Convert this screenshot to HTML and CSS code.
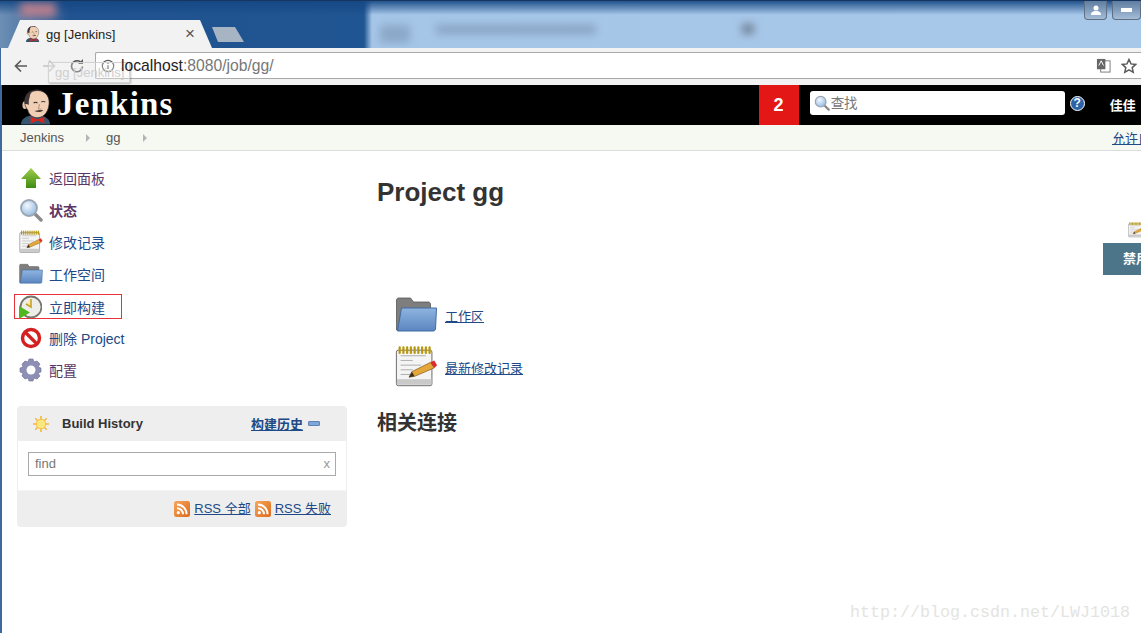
FILE: index.html
```html
<!DOCTYPE html>
<html lang="en">
<head>
  <meta charset="UTF-8">
  <title>gg [Jenkins]</title>
  <link rel="stylesheet" href="styles.css">
</head>
<body>
  <svg class="defs" width="0" height="0">
    <defs>
      <linearGradient id="g-green" x1="0" y1="0" x2="0" y2="1"><stop offset="0" stop-color="#9fd04a"/><stop offset="1" stop-color="#3f8a12"/></linearGradient>
      <linearGradient id="g-folder" x1="0" y1="0" x2="0" y2="1"><stop offset="0" stop-color="#8fb4e0"/><stop offset="1" stop-color="#5a86bf"/></linearGradient>
      <linearGradient id="g-rss" x1="0" y1="0" x2="1" y2="1"><stop offset="0" stop-color="#f7a65a"/><stop offset="1" stop-color="#dc6a1c"/></linearGradient>
      <radialGradient id="g-lens" cx=".4" cy=".35" r=".7"><stop offset="0" stop-color="#f2f8ff"/><stop offset="1" stop-color="#92b8e0"/></radialGradient>
      <symbol id="i-jenkins" viewBox="0 0 34 36">
        <path d="M1 36c0-5 4-8 9-9h12c5 1 9 4 9 9z" fill="#35566e"/>
        <ellipse cx="5" cy="16" rx="2.500" ry="4" fill="#e8c0a4"/>
        <path d="M5 13C5 6 11 1 18 1s12 5 12 12c0 4-1 8-3 11-2 3-5 5-9 5-5 0-9-3-10-8-2-2-3-5-3-8z" fill="#f0cfb4" stroke="#2a2a2a" stroke-width=".7"/>
        <path d="M5 15C3 8 8 1 15 0c-3 2-5 5-5 8-1 2-1 5-1 8-1-1-3-1-4-1z" fill="#3d3535"/>
        <path d="M15 0c3 0 6 0 9 2-4-1-7-1-9-1z" fill="#3d3535"/>
        <path d="M14 14c1-1 3-1 4 0M22 13c1-1 3-1 4 0" stroke="#2a2a2a" stroke-width="1.100" fill="none"/>
        <path d="M20 15l-1 5h3" stroke="#a97c62" stroke-width=".8" fill="none"/>
        <path d="M15 22c3-1 7-1 9-1-1 2-6 3-9 1z" fill="#4a4038"/>
        <path d="M11 28l7 3 7-3v7l-7-3-7 3z" fill="#d8261f"/>
      </symbol>
      <symbol id="i-folder" viewBox="0 0 42 36">
        <path d="M1 33V3c0-1 1-2 2-2h12l3 4h15c1 0 2 1 2 2v5H8L6 33z" fill="#7e7e7e" stroke="#555" stroke-width=".8"/>
        <path d="M2 34L6 11h35l-1 21c0 1-1 2-2 2z" fill="url(#g-folder)" stroke="#3f6aa3"/>
      </symbol>
      <symbol id="i-notepad" viewBox="0 0 46 44">
        <rect x="1.500" y="4" width="38" height="38" rx="2" fill="#f4f4f4" stroke="#666"/>
        <rect x="2" y="35" width="37" height="6" fill="#c9c9c9"/>
        <path d="M6 10h27M6 15h13M6 20h22M6 25h13M6 30h16" stroke="#aaa"/>
        <path d="M5 1v6M9 1v6M13 1v6M17 1v6M21 1v6M25 1v6M29 1v6M33 1v6M37 1v6" stroke="#b8980f" stroke-width="2.400" stroke-linecap="round"/>
        <path d="M15 33l3-6 20-10 4 6-21 9z" fill="#e5a63a" stroke="#7a5417" stroke-width=".7"/>
        <path d="M38 17l4-2 3 5-3 3z" fill="#df2b2b"/>
        <path d="M15 33l3-6 3 5z" fill="#3a3020"/>
      </symbol>
      <symbol id="i-up" viewBox="0 0 24 24">
        <path d="M12 2l10 11h-5v9H7v-9H2z" fill="url(#g-green)"/>
      </symbol>
      <symbol id="i-search" viewBox="0 0 24 24">
        <path d="M15 15l7 7" stroke="#8a8a8a" stroke-width="3.400" stroke-linecap="round"/>
        <circle cx="10" cy="10" r="8" fill="url(#g-lens)" stroke="#9aa5b2" stroke-width="1.800"/>
      </symbol>
      <symbol id="i-clock" viewBox="0 0 24 24">
        <circle cx="13" cy="12" r="10.500" fill="#ededea" stroke="#77756c" stroke-width="1.800"/>
        <path d="M13 4v8l-5-3" stroke="#c9a227" stroke-width="1.600" fill="#f6e9a8"/>
        <path d="M1 11l11 6.500L1 24z" fill="#4fb81e"/>
      </symbol>
      <symbol id="i-no" viewBox="0 0 24 24">
        <circle cx="12" cy="12" r="8.500" fill="#fff" stroke="#d42020" stroke-width="3.400"/>
        <path d="M6 6l12 12" stroke="#d42020" stroke-width="3.400"/>
      </symbol>
      <symbol id="i-gear" viewBox="0 0 24 24">
        <path d="M10 1h4l1 3 3-1 3 3-2 3 3 1v4l-3 1 2 3-3 3-3-1-1 3h-4l-1-3-3 1-3-3 1-3-3-1v-4l3-1-1-3 3-3 3 1z" fill="#8d90b4" stroke="#6a6c90" stroke-width=".6"/>
        <circle cx="12" cy="12" r="4.500" fill="#fff"/>
      </symbol>
      <symbol id="i-sun" viewBox="0 0 16 16">
        <path d="M8 0v16M0 8h16M2.300 2.300l11.400 11.400M13.700 2.300L2.300 13.700" stroke="#f4b63e" stroke-width="1.600"/>
        <circle cx="8" cy="8" r="4.800" fill="#fbe77e" stroke="#f2c248"/>
      </symbol>
      <symbol id="i-rss" viewBox="0 0 16 16">
        <rect width="16" height="16" rx="2.500" fill="url(#g-rss)"/>
        <circle cx="4.300" cy="11.700" r="1.600" fill="#fff"/>
        <path d="M3 7.200a6 6 0 0 1 6 6M3 3.600a9.600 9.600 0 0 1 9.600 9.600" stroke="#fff" stroke-width="2" fill="none"/>
      </symbol>
    </defs>
  </svg>

  <div class="window">
    <div class="titlebar">
      <span class="blur blur-red"></span>
      <span class="blur blur-icon"></span>
      <span class="blur blur-text"></span>
      <span class="blur blur-dark"></span>
      <div class="tab">
        <svg class="tab-icon"><use href="#i-jenkins"/></svg>
        <span class="tab-title">gg [Jenkins]</span>
        <span class="tab-close">×</span>
      </div>
      <div class="tab-new"></div>
      <div class="win-buttons">
        <span class="win-btn">
          <svg width="12" height="10" viewBox="0 0 12 10"><circle cx="6" cy="3" r="2.500" fill="#fff"/><path d="M1 10c0-3 2-4 5-4s5 1 5 4z" fill="#fff"/></svg>
        </span>
        <span class="win-btn">
          <span class="win-min"></span>
        </span>
      </div>
    </div>

    <div class="toolbar">
      <svg class="nav-icon" viewBox="0 0 16 16"><path d="M14 8H3M8 2.500L2.500 8 8 13.500" fill="none" stroke="#5a5a5a" stroke-width="1.700"/></svg>
      <svg class="nav-icon" viewBox="0 0 16 16"><path d="M2 8h11M8 2.500L13.500 8 8 13.500" fill="none" stroke="#c4c4c4" stroke-width="1.700"/></svg>
      <svg class="nav-icon" viewBox="0 0 16 16"><path d="M13.500 8.500A5.500 5.500 0 1 1 11.500 4" fill="none" stroke="#5a5a5a" stroke-width="1.700"/><path d="M14 1v5H9z" fill="#5a5a5a"/></svg>
      <div class="omnibox">
        <svg class="info-icon" viewBox="0 0 16 16"><circle cx="8" cy="8" r="6.500" fill="none" stroke="#5a5a5a" stroke-width="1.400"/><path d="M8 7v4.500M8 4.200v1.600" stroke="#5a5a5a" stroke-width="1.500"/></svg>
        <span class="url"><b>localhost</b>:8080/job/gg/</span>
        <svg class="omni-translate" viewBox="0 0 16 16"><rect x="5" y="3" width="10" height="12" fill="#fff" stroke="#777"/><rect x="1" y="1" width="9" height="11" fill="#666"/><path d="M3 8l2.500-5L8 8" stroke="#fff" fill="none"/></svg>
        <svg class="omni-star" viewBox="0 0 16 16"><path d="M8 1.500l2 4.400 4.800.5-3.600 3.200 1 4.700L8 11.900l-4.200 2.400 1-4.700L1.200 6.400 6 5.900z" fill="none" stroke="#5a5a5a" stroke-width="1.500"/></svg>
      </div>
    </div>
    <div class="tooltip">gg [Jenkins]</div>

    <div class="page">
      <header class="jenkins-head">
        <svg class="logo"><use href="#i-jenkins"/></svg>
        <span class="wordmark">Jenkins</span>
        <span class="head-count">2</span>
        <div class="search-box">
          <svg class="search-icon"><use href="#i-search"/></svg>
          <span class="search-text">查找</span>
        </div>
        <span class="help">?</span>
        <span class="user">佳佳</span>
      </header>

      <nav class="breadcrumb">
        <a class="crumb">Jenkins</a><span class="crumb-arrow"></span>
        <a class="crumb">gg</a><span class="crumb-arrow"></span>
        <a class="auto-refresh">允许自动刷新</a>
      </nav>

      <div class="main">
        <aside class="side">
          <ul class="tasks">
            <li class="task"><svg class="task-icon"><use href="#i-up"/></svg><span class="task-label plum">返回面板</span></li>
            <li class="task"><svg class="task-icon"><use href="#i-search"/></svg><span class="task-label plum strong">状态</span></li>
            <li class="task"><svg class="task-icon"><use href="#i-notepad"/></svg><span class="task-label">修改记录</span></li>
            <li class="task"><svg class="task-icon"><use href="#i-folder"/></svg><span class="task-label">工作空间</span></li>
            <li class="task task-marked"><svg class="task-icon"><use href="#i-clock"/></svg><span class="task-label">立即构建</span></li>
            <li class="task"><svg class="task-icon"><use href="#i-no"/></svg><span class="task-label">删除 Project</span></li>
            <li class="task"><svg class="task-icon"><use href="#i-gear"/></svg><span class="task-label plum">配置</span></li>
          </ul>

          <section class="history">
            <div class="history-head">
              <svg class="sun"><use href="#i-sun"/></svg>
              <span class="history-title">Build History</span>
              <a class="history-link">构建历史</a>
              <span class="history-dash"></span>
            </div>
            <div class="history-body">
              <div class="find-box"><span>find</span><span class="find-x">x</span></div>
            </div>
            <div class="history-foot">
              <svg class="rss"><use href="#i-rss"/></svg><a>RSS 全部</a>
              <svg class="rss"><use href="#i-rss"/></svg><a>RSS 失败</a>
            </div>
          </section>
        </aside>

        <main class="content">
          <h1 class="title">Project gg</h1>
          <ul class="links">
            <li class="link-row"><svg class="folder-big"><use href="#i-folder"/></svg><a>工作区</a></li>
            <li class="link-row"><svg class="notepad-big"><use href="#i-notepad"/></svg><a>最新修改记录</a></li>
          </ul>
          <h2 class="related">相关连接</h2>
        </main>

        <div class="right-col">
          <svg class="edit-icon"><use href="#i-notepad"/></svg>
          <div class="disable-btn">禁用项目</div>
        </div>
      </div>
    </div>
  </div>
  <div class="watermark">http://blog.csdn.net/LWJ1018</div>
</body>
</html>
```

FILE: styles.css
```css
html, body {
  margin: 0;
  padding: 0;
  width: 1141px;
  height: 633px;
  overflow: hidden;
  background: #fff;
  font-family: "Liberation Sans", "Noto Sans CJK SC", sans-serif;
  font-size: 14px;
}

.defs {
  display: block;
  height: 0;
}

ul {
  list-style: none;
  margin: 0;
  padding: 0;
}

.window {
  display: flex;
  flex-direction: column;
  width: 1141px;
  height: 633px;
  overflow: hidden;
  background: #3d6a9c;
}

/* title bar */
.titlebar {
  position: relative;
  display: flex;
  align-items: flex-end;
  height: 48px;
  flex: none;
  box-sizing: border-box;
  padding-left: 8px;
  border-top: 1px solid #16365f;
  background: linear-gradient(180deg, rgba(20,70,130,0.9) 0, rgba(20,70,130,0) 14px),
              linear-gradient(90deg, #6d8fb5 0, #215390 70px, #1f5592 364px, #a6c6e8 372px, #a8c8ea 1141px);
  overflow: hidden;
}

.blur {
  position: absolute;
  filter: blur(4px);
}

.blur-red {
  left: 20px;
  top: 2px;
  width: 36px;
  height: 14px;
  background: #b77f8d;
}

.blur-icon {
  left: 380px;
  top: 24px;
  width: 30px;
  height: 18px;
  background: #8ba8c8;
}

.blur-text {
  left: 436px;
  top: 24px;
  width: 160px;
  height: 9px;
  background: #87a2c2;
}

.blur-dark {
  left: 742px;
  top: 23px;
  width: 12px;
  height: 10px;
  background: #6f7f92;
}

.tab {
  position: relative;
  display: flex;
  align-items: center;
  width: 204px;
  height: 28px;
  box-sizing: border-box;
  padding-left: 17px;
  background: #f2f2f2;
  clip-path: polygon(12px 0, 192px 0, 204px 100%, 0 100%);
}

.tab-icon {
  width: 16px;
  height: 16px;
}

.tab-title {
  width: 139px;
  margin-left: 5px;
  font-size: 13px;
  color: #222;
}

.tab-close {
  font-size: 17px;
  color: #555;
}

.tab-new {
  width: 32px;
  height: 15px;
  margin: 0 0 6px 0;
  background: #a7b4c4;
  clip-path: polygon(0 0, 23px 0, 100% 100%, 6px 100%);
}

.win-buttons {
  display: flex;
  gap: 5px;
  margin-left: auto;
  align-self: flex-start;
}

.win-btn {
  display: flex;
  align-items: center;
  justify-content: center;
  width: 23px;
  height: 19px;
  box-sizing: border-box;
  border: 1px solid #5d6e85;
  border-top: 0;
  border-radius: 0 0 4px 4px;
  background: linear-gradient(180deg, #5f7da0, #a4bdd8);
}

.win-buttons .win-btn:last-child {
  width: 29px;
}

.win-min {
  width: 11px;
  height: 4px;
  background: #fff;
}

/* toolbar */
.toolbar {
  display: flex;
  align-items: center;
  height: 37px;
  flex: none;
  box-sizing: border-box;
  padding: 0 0 2px 12px;
  margin-left: 1px;
  background: #f2f2f2;
  gap: 12px;
}

.nav-icon {
  width: 16px;
  height: 16px;
  flex: none;
}

.omnibox {
  display: flex;
  align-items: center;
  flex: 1;
  height: 27px;
  box-sizing: border-box;
  margin-left: -2px;
  padding-left: 5px;
  background: #fff;
  border: 1px solid #a9a9a9;
  border-right: 0;
  border-radius: 2px 0 0 2px;
}

.info-icon {
  width: 14px;
  height: 14px;
  flex: none;
}

.url {
  position: relative;
  z-index: 2;
  margin-left: 6px;
  font-size: 15.700px;
  color: #777;
}

.url b {
  font-weight: normal;
  color: #222;
}

.omni-translate {
  width: 15px;
  height: 15px;
  margin-left: auto;
}

.omni-star {
  width: 16px;
  height: 16px;
  margin: 0 4px 0 10px;
}

/* hover tooltip left over the toolbar */
.tooltip {
  position: absolute;
  left: 48px;
  top: 62px;
  width: 74px;
  height: 19px;
  padding-left: 6px;
  font-size: 13px;
  line-height: 19px;
  color: #cfcfcf;
  background: rgba(245,245,245,0.3);
  border: 1px solid #d4d4d4;
  box-shadow: 1px 1px 2px rgba(0,0,0,0.25);
  white-space: nowrap;
}

/* jenkins page */
.page {
  flex: 1;
  margin-left: 2px;
  background: #fff;
}

.jenkins-head {
  display: flex;
  align-items: center;
  height: 40px;
  background: #000;
}

.logo {
  width: 33px;
  height: 36px;
  margin: 4px 0 0 18px;
}

.wordmark {
  margin: -2px 0 0 4px;
  font-family: "Liberation Serif", serif;
  font-weight: bold;
  font-size: 33px;
  letter-spacing: 1.200px;
  color: #fff;
}

.head-count {
  align-self: stretch;
  width: 40px;
  margin-left: 585px;
  background: #e41717;
  color: #fff;
  font-weight: bold;
  font-size: 18px;
  line-height: 40px;
  text-align: center;
}

.search-box {
  display: flex;
  align-items: center;
  width: 255px;
  height: 24px;
  margin-left: 11px;
  margin-top: -4px;
  background: #fff;
  border-radius: 3px;
}

.search-icon {
  width: 16px;
  height: 16px;
  margin-left: 4px;
}

.search-text {
  margin: 0 0 2px 1px;
  font-size: 13.500px;
  color: #777;
}

.help {
  width: 13px;
  height: 13px;
  margin: -4px 0 0 5px;
  border: 1px solid #fff;
  border-radius: 50%;
  background: #2e62a6;
  color: #fff;
  font-size: 12px;
  font-weight: bold;
  line-height: 13px;
  text-align: center;
}

.user {
  margin: -2px 0 0 25px;
  color: #fff;
  font-weight: bold;
  font-size: 13px;
  white-space: nowrap;
}

.breadcrumb {
  display: flex;
  align-items: center;
  height: 26px;
  box-sizing: border-box;
  padding-left: 18px;
  background: #f6f8f2;
  border-bottom: 1px solid #dcdcdc;
  white-space: nowrap;
  overflow: hidden;
}

.crumb {
  font-size: 13px;
  color: #555;
}

.crumb-arrow {
  width: 0;
  height: 0;
  margin: 1px 16px 0 22px;
  border-left: 4px solid #b5b5b5;
  border-top: 4px solid transparent;
  border-bottom: 4px solid transparent;
}

.auto-refresh {
  margin-left: auto;
  margin-right: -49px;
  font-size: 13px;
  color: #204a87;
  text-decoration: underline;
}

.main {
  display: flex;
}

/* side panel */
.side {
  width: 345px;
  flex: none;
  padding: 11px 0 0 15px;
  box-sizing: border-box;
}

.task {
  display: flex;
  align-items: center;
  height: 32px;
  padding-left: 2px;
}

.task-icon {
  width: 24px;
  height: 24px;
  flex: none;
}

.task-label {
  margin-left: 6px;
  color: #204a87;
  font-size: 14px;
}

.plum {
  color: #5c3566;
}

.strong {
  font-weight: bold;
}

.task-marked {
  box-sizing: border-box;
  width: 108px;
  height: 25px;
  margin: 4px 0 3px -3px;
  padding-left: 3px;
  border: 1px solid #e8303a;
}

.task-marked .task-label {
  margin-left: 7px;
}

.history {
  width: 330px;
  margin-top: 20px;
  border-radius: 4px;
  background: #eeeeee;
}

.history-head {
  display: flex;
  align-items: center;
  height: 35px;
  padding: 0 27px 0 16px;
  box-sizing: border-box;
}

.sun {
  width: 16px;
  height: 16px;
}

.history-title {
  margin-left: 13px;
  font-weight: bold;
  font-size: 13px;
  color: #333;
}

.history-link {
  margin-left: auto;
  font-size: 13px;
  font-weight: bold;
  color: #204a87;
  text-decoration: underline;
}

.history-dash {
  width: 10px;
  height: 3px;
  margin-left: 5px;
  background: #7ea6d8;
  border: 1px solid #5d82b4;
  border-radius: 1px;
}

.history-body {
  margin: 0 1px;
  padding: 11px 10px 14px;
  background: #fff;
  border-bottom: 1px solid #f4f4f4;
}

.find-box {
  display: flex;
  justify-content: space-between;
  align-items: center;
  height: 24px;
  box-sizing: border-box;
  padding: 0 5px 2px 6px;
  background: #fff;
  border: 1px solid #aaa;
  font-size: 13px;
  color: #777;
}

.find-x {
  color: #999;
}

.history-foot {
  display: flex;
  align-items: center;
  justify-content: flex-end;
  height: 36px;
  padding: 0 16px 0 0;
  font-size: 13px;
}

.history-foot a {
  margin: 0 0 3px 4px;
  color: #204a87;
  text-decoration: underline;
}

.rss {
  width: 16px;
  height: 16px;
  margin-left: 4px;
}

/* main panel */
.content {
  flex: 1;
  padding-left: 29px;
  box-sizing: border-box;
}

.title {
  margin: 25px 0 0 1px;
  font-size: 26px;
  line-height: 32px;
  color: #333;
}

.links {
  margin-top: 82px;
  padding-left: 19px;
}

.link-row {
  display: flex;
  align-items: center;
  height: 50px;
  margin-bottom: 2px;
  gap: 7px;
}

.link-row a {
  font-size: 13px;
  color: #204a87;
  text-decoration: underline;
}

.folder-big {
  width: 43px;
  height: 36px;
}

.notepad-big {
  width: 43px;
  height: 42px;
}

.related {
  margin: 16px 0 0 1px;
  font-size: 20px;
  line-height: 30px;
  color: #333;
}

.right-col {
  width: 38px;
  flex: none;
  overflow: hidden;
  padding-top: 71px;
}

.edit-icon {
  display: block;
  width: 16px;
  height: 16px;
  margin-left: 25px;
}

.disable-btn {
  width: 70px;
  height: 32px;
  margin-top: 5px;
  background: #4d758a;
  color: #fff;
  font-size: 13px;
  font-weight: bold;
  line-height: 32px;
  padding-left: 20px;
  white-space: nowrap;
}

.watermark {
  position: absolute;
  left: 850px;
  top: 603px;
  font-family: "Liberation Mono", monospace;
  font-size: 16.670px;
  color: #e4e4df;
  white-space: nowrap;
}
```
